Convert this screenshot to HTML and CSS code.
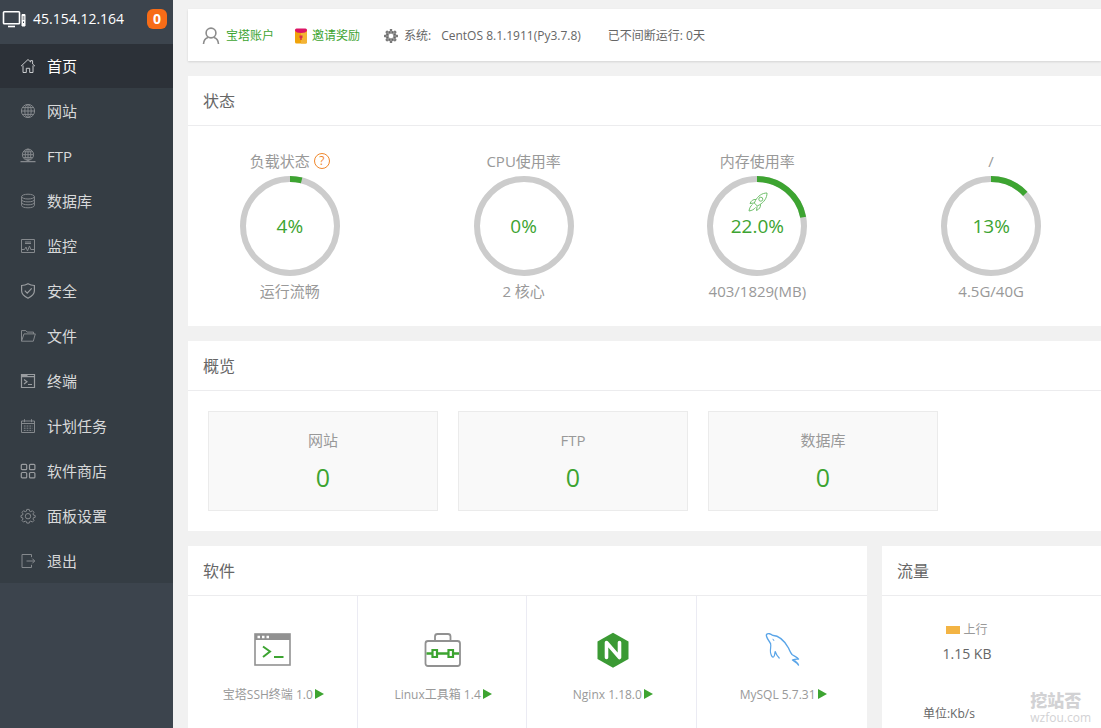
FILE: index.html
```html
<!DOCTYPE html>
<html lang="zh-CN">
<head>
<meta charset="utf-8">
<title>宝塔面板</title>
<link rel="stylesheet" href="styles.css">
</head>
<body>
<aside class="sidebar">
  <div class="server">
    <svg class="server-icon" viewBox="0 0 24 18" width="24" height="18" fill="none" stroke="#fff" stroke-width="1.6"><rect x="1.500" y="1.800" width="16" height="12" rx=".8"/><path d="M6 16.500h7"/><path d="M20 4.500h3v11.500h-3z" fill="#fff" stroke="#fff" stroke-width="1"/><path d="M20.600 7h1.800M20.600 9h1.800M21.500 11.500v1.500" stroke="#3c444d" stroke-width="1"/></svg>
    <span class="server-ip">45.154.12.164</span>
    <span class="badge">0</span>
  </div>
  <nav class="menu">
    <a class="menu-item active" href="#"><svg viewBox="0 0 16 16"><path d="M1 8.200 8 1.500l2.600 2.500V2.600h2V6L15 8.200M3 7.500V14.500h3.300v-4.200h3.400v4.200H13V7.500"/></svg>首页</a>
    <a class="menu-item" href="#"><svg viewBox="0 0 16 16"><circle cx="8" cy="8" r="6.600"/><ellipse cx="8" cy="8" rx="3.200" ry="6.600"/><path d="M8 1.400v13.200M1.400 8h13.200M2.400 4.600h11.200M2.400 11.400h11.200"/></svg>网站</a>
    <a class="menu-item" href="#"><svg viewBox="0 0 16 16"><circle cx="8" cy="6.700" r="5.600"/><ellipse cx="8" cy="6.700" rx="2.800" ry="5.600"/><path d="M8 1v12M2.400 6.700h11.200M3.400 3.800h9.200M3.400 9.600h9.200"/><path d="M.5 13.600h15M6.500 13.600h3" stroke-width="1.400"/></svg>FTP</a>
    <a class="menu-item" href="#"><svg viewBox="0 0 16 16"><ellipse cx="8" cy="3.600" rx="6.400" ry="2.400"/><path d="M1.600 3.600v8.800c0 3.200 12.800 3.200 12.800 0V3.600M1.600 6.500c0 3.200 12.800 3.200 12.800 0M1.600 9.400c0 3.200 12.800 3.200 12.800 0"/></svg>数据库</a>
    <a class="menu-item" href="#"><svg viewBox="0 0 16 16"><path d="M1.500 1.500h13v13h-13zM5 4h6M5 5.500h6M2 11.500h2.500L6 9l1.500 4L9.500 8l1.300 3.500H14"/></svg>监控</a>
    <a class="menu-item" href="#"><svg viewBox="0 0 16 16" class="strong"><path d="M8 .8c2 1.200 4.200 1.700 6.400 1.700v5.300c0 3.500-3 5.800-6.400 7.400C4.600 13.600 1.600 11.300 1.600 7.800V2.500C3.800 2.500 6 2 8 .8zM4.800 7.600l2.400 2.500 4.500-4.700"/></svg>安全</a>
    <a class="menu-item" href="#"><svg viewBox="0 0 16 16"><path d="M1.500 13.200V2.600h4.300l1.300 1.500h6.400v1.800M1.500 13.200 4 5.900h11.300l-2 7.300z"/></svg>文件</a>
    <a class="menu-item" href="#"><svg viewBox="0 0 16 16" class="strong"><path d="M1.500 1.500h13v13h-13zM1.500 3.600h13M4 6.500l3 2.300-3 2.300M8 11.500h4"/><path d="M2 2.500h5.500"/></svg>终端</a>
    <a class="menu-item" href="#"><svg viewBox="0 0 16 16"><path d="M1.500 3h13v11.500h-13zM1.500 5.500h13M4.500 1.200v3M11.500 1.200v3"/><path d="M3.800 8h8.800M3.800 10.200h8.800M3.800 12.400h8.800" stroke-dasharray="1.800 1"/></svg>计划任务</a>
    <a class="menu-item" href="#"><svg viewBox="0 0 16 16" class="strong"><rect x="1.300" y="1.300" width="5.400" height="5.400" rx="1"/><rect x="9.500" y="1.300" width="5.400" height="5.400" rx="1"/><rect x="1.300" y="9.500" width="5.400" height="5.400" rx="1"/><rect x="9.500" y="9.500" width="5.400" height="5.400" rx="1"/></svg>软件商店</a>
    <a class="menu-item" href="#"><svg viewBox="0 0 16 16"><path d="M6.800 1.400h2.400l.4 1.800 1.200.5 1.600-1 1.600 1.600-1 1.600.5 1.200 1.700.4v1.800l-1.700.4-.5 1.300 1 1.500-1.600 1.600-1.600-1-1.200.5-.4 1.500H6.800l-.4-1.500-1.200-.5-1.600 1L2 12.500 3 11l-.5-1.300-1.500-.4V7.500l1.500-.4L3 5.900 2 4.300l1.600-1.600 1.600 1 1.200-.5z"/><circle cx="8" cy="8.200" r="2.700"/></svg>面板设置</a>
    <a class="menu-item" href="#"><svg viewBox="0 0 16 16"><path d="M11.500 4.200V1.500H2v13h9.500v-2.700M6.500 8h8M12.300 5.600 14.700 8l-2.400 2.400"/></svg>退出</a>
  </nav>
</aside>

<main class="main">
  <header class="card topbar">
    <a class="account" href="#"><svg viewBox="0 0 18 18" width="18" height="18" fill="none" stroke="#8c8c8c" stroke-width="1.600"><circle cx="9" cy="6" r="4.900"/><path d="M1.500 17c.2-3.500 2-5.800 4.500-6.500M16.500 17c-.2-3.500-2-5.800-4.500-6.500"/></svg>宝塔账户</a>
    <a class="invite" href="#"><svg viewBox="0 0 14 16" width="14" height="16"><rect x="1" y="1" width="12" height="14.500" rx="1.500" fill="#f0a30a"/><path d="M7 4h6v10a1.500 1.500 0 0 1-1.500 1.500H7z" fill="#f3b335"/><path d="M1 2.500Q1 .5 2.500.5h9Q13 .5 13 2.500 12 5 7 5T1 2.500z" fill="#dc1467"/><path d="M5.500 7.500h3v2.200l-.8.500V12H6.300v-1.800l-.8-.5z" fill="#d92b4f"/></svg>邀请奖励</a>
    <span class="system"><svg viewBox="0 0 16 16" width="16" height="16"><circle cx="8" cy="8" r="3.900" fill="none" stroke="#999" stroke-width="3.400"/><circle cx="8" cy="8" r="6" fill="none" stroke="#777" stroke-width="2" pathLength="16" stroke-dasharray="1 1" stroke-dashoffset=".5"/><circle cx="8" cy="8" r="4" fill="none" stroke="#666" stroke-width="1.600" pathLength="16" stroke-dasharray="1 1" stroke-dashoffset="1.500"/><circle cx="8" cy="8" r="1.900" fill="#fff"/></svg>系统:</span>
    <span class="os">CentOS 8.1.1911(Py3.7.8)</span>
    <span class="uptime">已不间断运行: 0天</span>
  </header>

  <section class="card">
    <h2 class="card-title">状态</h2>
    <ul class="gauges">
      <li class="gauge">
        <h3 class="gauge-name">负载状态<button class="help" type="button" aria-label="负载状态说明">?</button></h3>
        <div class="ring"><svg viewBox="0 0 100 100"><circle class="track" cx="50" cy="50" r="47"/><circle class="value" cx="50" cy="50" r="47" pathLength="100" stroke-dasharray="4 100"/></svg><span>4%</span></div>
        <p class="gauge-note">运行流畅</p>
      </li>
      <li class="gauge">
        <h3 class="gauge-name">CPU使用率</h3>
        <div class="ring"><svg viewBox="0 0 100 100"><circle class="track" cx="50" cy="50" r="47"/></svg><span>0%</span></div>
        <p class="gauge-note">2 核心</p>
      </li>
      <li class="gauge">
        <h3 class="gauge-name">内存使用率</h3>
        <div class="ring"><svg viewBox="0 0 100 100"><circle class="track" cx="50" cy="50" r="47"/><circle class="value" cx="50" cy="50" r="47" pathLength="100" stroke-dasharray="22 100"/><g transform="translate(41 16)" fill="none" stroke="#6fbf6b" stroke-width="1"><path d="M19 1c-5 0-9 3-11.500 7.500L6.300 11l3 3 2.200-1.200C16 10.200 19 6 19 1z"/><circle cx="12.800" cy="7.200" r="2"/><path d="M8 7.500C5 7.200 3.200 8.700 2 11.500l4-.5M12.500 12.300c.3 3-1.200 4.800-4 6.200l.6-4.200M4.500 12.500C2.500 14 1.500 16 1 19c3-.5 5-1.500 6.500-3.500"/></g></svg><span>22.0%</span></div>
        <p class="gauge-note">403/1829(MB)</p>
      </li>
      <li class="gauge">
        <h3 class="gauge-name">/</h3>
        <div class="ring"><svg viewBox="0 0 100 100"><circle class="track" cx="50" cy="50" r="47"/><circle class="value" cx="50" cy="50" r="47" pathLength="100" stroke-dasharray="13 100"/></svg><span>13%</span></div>
        <p class="gauge-note">4.5G/40G</p>
      </li>
    </ul>
  </section>

  <section class="card">
    <h2 class="card-title">概览</h2>
    <div class="totals">
      <div class="total"><span>网站</span><a href="#">0</a></div>
      <div class="total"><span>FTP</span><a href="#">0</a></div>
      <div class="total"><span>数据库</span><a href="#">0</a></div>
    </div>
  </section>

  <div class="bottom">
    <section class="card software">
      <h2 class="card-title">软件</h2>
      <div class="apps">
        <div class="app">
          <svg viewBox="0 0 40 40"><rect x="2" y="4" width="35" height="31" fill="#fff" stroke="#919191" stroke-width="1.600"/><path d="M2 4h35v6H2z" fill="#919191"/><path d="M4.500 7h2.500M9 7h2.500M13.500 7H16" stroke="#fff" stroke-width="2.500"/><path d="m10 16.500 7 5-7 5.500M21 27h9.500" fill="none" stroke="#3da431" stroke-width="2"/></svg>
          <p>宝塔SSH终端 1.0<i class="play"></i></p>
        </div>
        <div class="app">
          <svg viewBox="0 0 40 40" fill="none"><rect x="2.500" y="11" width="34.500" height="25" rx="2.500" stroke="#919191" stroke-width="1.800"/><path d="M12 11V6.500Q12 4 14.500 4h10.500q2.500 0 2.500 2.500V11" stroke="#919191" stroke-width="1.800"/><path d="M3.500 23.500H9m6 0h10m6 0h5" stroke="#3da431" stroke-width="2.400"/><path d="M9.500 20h4.500v7H9.500zm16 0H30v7h-4.500z" stroke="#3da431" stroke-width="2.200"/></svg>
          <p>Linux工具箱 1.4<i class="play"></i></p>
        </div>
        <div class="app">
          <svg viewBox="0 0 40 40"><path d="m20 2.800 15.500 8.700v17.400L20 37.700 4.500 28.900V11.500z" fill="#3b9a34"/><path d="M13.500 27.500v-15l13 15v-15" fill="none" stroke="#fff" stroke-width="3.600" stroke-linecap="round" stroke-linejoin="round"/></svg>
          <p>Nginx 1.18.0<i class="play"></i></p>
        </div>
        <div class="app">
          <svg viewBox="0 0 40 40" fill="none" stroke="#5aa5e8" stroke-linecap="round" stroke-linejoin="round"><path d="M7.500 13.500C5.500 10 2.500 6.500 3.500 4.500c1.500-1.800 4.500-.5 6 .8 7.500.5 12 5.500 16 12.700 1.200 2.300 1.800 4.500 3.500 6.500 2.500 1.700 5.500 2.500 6.500 4.500-1.800.2-3.500.3-5 .6 2 1.700 4 3 5 5.400-1.800-2.300-4-3.200-6-5" stroke-width="1.400"/><path d="M7.500 13.500c1 2.500-.6 5.500 0 9 .5 2.500 1.500 5 3 4.500 1.500-.5 1-3.500 1.700-5.500.8 2.500 2 4.500 4 6.500" stroke-width="1.200"/><path d="m10 9.200.8 1.300"/></svg>
          <p>MySQL 5.7.31<i class="play"></i></p>
        </div>
      </div>
    </section>
    <section class="card traffic">
      <h2 class="card-title">流量</h2>
      <div class="rates">
        <div class="rate"><span class="rate-name"><i class="swatch"></i>上行</span><strong>1.15 KB</strong></div>
      </div>
      <p class="unit">单位:Kb/s</p>
    </section>
  </div>
</main>
<div class="watermark"><b>挖站否</b><span>wzfou.com</span></div>
</body>
</html>
```
FILE: styles.css
```css
* { box-sizing: border-box; }
body {
  margin: 0;
  min-height: 100vh;
  display: flex;
  background: #f1f1f1;
  color: #666;
  font: 12px/20px "Open Sans", "Noto Sans CJK SC", sans-serif;
}
h2, h3, p, ul { margin: 0; padding: 0; font-weight: 400; }
ul { list-style: none; }
a { color: #3da431; text-decoration: none; }

.sidebar { flex: 0 0 173px; background: #3c444d; }
.server {
  display: flex;
  align-items: center;
  height: 44px;
  padding: 0 6px 6px 2px;
  color: #fff;
  font-size: 14px;
}
.server-icon { margin-right: 7px; }
.badge {
  margin-left: auto;
  width: 20px;
  height: 20px;
  border-radius: 6px;
  background: #f76c17;
  font-weight: 700;
  line-height: 20px;
  text-align: center;
}
.menu { display: grid; gap: 1px; background: #353d44; }
.menu-item {
  display: flex;
  align-items: center;
  gap: 11px;
  height: 44px;
  padding-left: 20px;
  color: #d8d9da;
  font-size: 15px;
}
.menu-item svg {
  width: 16px;
  height: 16px;
  fill: none;
  stroke: #85898d;
  stroke-width: 1;
}
.menu-item .strong { stroke: #9a9da0; stroke-width: 1.2; }
.active { background: #2c3138; color: #fff; }
.active svg { stroke: #c9cbcd; }

.main {
  flex: 1;
  min-width: 0;
  display: flex;
  flex-direction: column;
  gap: 15px;
  padding: 9px 0 0 15px;
}
.card { background: #fff; }
.card-title {
  height: 50px;
  padding-left: 15px;
  border-bottom: 1px solid #ececee;
  font-size: 16px;
  line-height: 50px;
}

.topbar {
  display: flex;
  align-items: center;
  height: 52px;
  padding: 2px 0 0 14px;
  box-shadow: 0 1px 2px rgba(0, 0, 0, .12);
  white-space: nowrap;
}
.topbar > * { display: flex; align-items: center; }
.account { gap: 6px; margin-right: 20px; }
.invite { gap: 4px; margin-right: 23px; }
.system { gap: 5px; margin-right: 10px; }
.os { margin-right: 27px; }

.gauges {
  display: grid;
  grid-template-columns: repeat(4, 1fr);
  height: 200px;
  margin: 0 -7px 0 -15px;
  padding-top: 22px;
}
.gauge {
  display: flex;
  flex-direction: column;
  align-items: center;
  color: #999;
}
.gauge-name {
  display: flex;
  align-items: center;
  gap: 4px;
  height: 26px;
  margin-bottom: 2px;
  font-size: 15px;
}
.help {
  width: 16px;
  height: 16px;
  padding: 0;
  border: 1px solid #f0872b;
  border-radius: 50%;
  background: none;
  color: #f0872b;
  font: 12px/14px "Open Sans", sans-serif;
}
.ring { display: grid; width: 100px; height: 100px; place-items: center; }
.ring > * { grid-area: 1 / 1; }
.ring span { color: #3da431; font-size: 19px; }
.ring svg { width: 100px; height: 100px; }
.track, .value { fill: none; stroke: #ccc; stroke-width: 6; }
.value { stroke: #3da431; transform: rotate(-90deg); transform-origin: center; }
.gauge-note { font-size: 15px; line-height: 30px; }

.totals {
  display: grid;
  grid-template-columns: repeat(auto-fill, 230px);
  gap: 20px;
  padding: 20px;
}
.total {
  display: flex;
  flex-direction: column;
  align-items: center;
  height: 100px;
  padding-top: 13px;
  border: 1px solid #ebebeb;
  background: #f9f9f9;
  color: #999;
  font-size: 15px;
  line-height: 30px;
}
.total a { font-size: 25px; line-height: 44px; }

.bottom {
  flex: 1;
  display: grid;
  grid-template-columns: 3.1fr 1fr;
  gap: 15px;
}
.software { display: flex; flex-direction: column; }
.apps { flex: 1; display: grid; grid-template-columns: repeat(4, 1fr); }
.app {
  padding: 34px 0 0 2px;
  border-right: 1px solid #ebebf3;
  color: #999;
  text-align: center;
}
.app:last-child { border-right: 0; }
.app svg { display: block; width: 40px; height: 40px; margin: 0 auto 15px; }
.play {
  display: inline-block;
  margin-left: 2px;
  border: solid transparent;
  border-width: 5px 0 5px 9px;
  border-left-color: #3da431;
}

.rates { display: flex; padding: 24px 50px 0; }
.rate { display: flex; flex-direction: column; align-items: center; flex: 0 0 70px; }
.rate-name { display: flex; align-items: center; gap: 3px; color: #999; }
.swatch { width: 14px; height: 8px; background: #f3b444; }
.rate strong { font-size: 14px; font-weight: 400; line-height: 28px; }
.unit { padding: 36px 0 4px 41px; }

.watermark {
  position: absolute;
  right: 10px;
  bottom: 2px;
  display: grid;
  justify-items: start;
  color: #d2d2d4;
  font-size: 12px;
  line-height: 16px;
}
.watermark b { font-size: 17px; line-height: 18px; font-weight: 900; }
```
